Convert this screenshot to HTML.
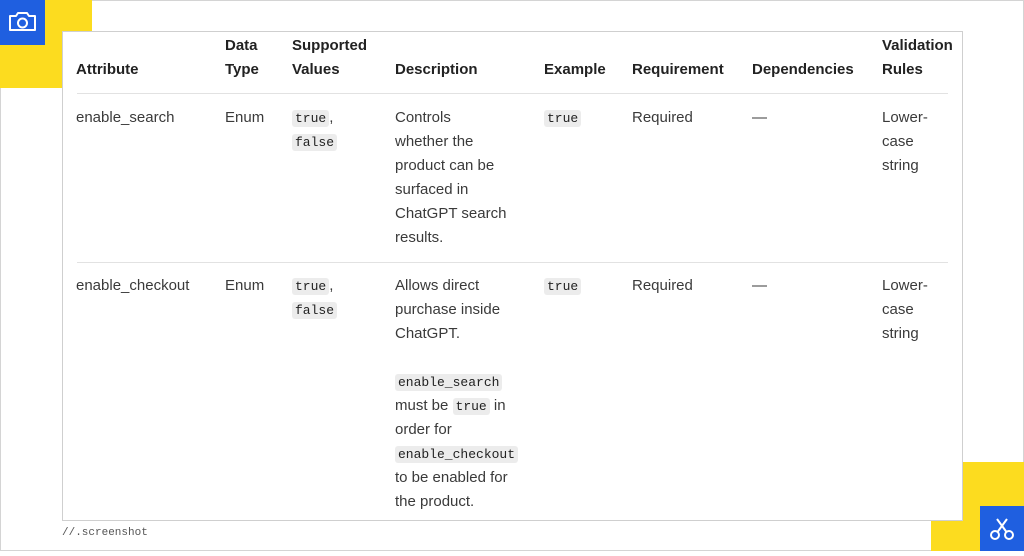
<!DOCTYPE html>
<html><head><style>
body{margin:0;width:1024px;height:551px;background:#fff;position:relative;overflow:hidden;font-family:"Liberation Sans",sans-serif;}
.frame{position:absolute;left:0;top:0;width:1022px;height:549px;border:1px solid #d4d4d4;}
.y1{position:absolute;left:0;top:0;width:92px;height:88px;background:#fcdc1f;}
.b1{position:absolute;left:0;top:0;width:45px;height:45px;background:#1f5fe0;}
.y2{position:absolute;left:931px;top:462px;width:93px;height:89px;background:#fcdc1f;}
.b2{position:absolute;left:980px;top:506px;width:44px;height:45px;background:#1f5fe0;}
.card{position:absolute;left:62px;top:31px;width:899px;height:488px;background:#fff;border:1px solid #cfcfcf;overflow:hidden;}
.t{position:absolute;font-size:15px;line-height:24px;color:#3a3a3a;}
.t div{height:24px;overflow:visible;white-space:nowrap;}
.h{font-weight:bold;color:#222;}
code{font-family:"Liberation Mono",monospace;font-size:13px;line-height:1;background:#ececec;border-radius:3px;padding:1px 3px;color:#222;}
.line{position:absolute;left:14px;width:871px;height:1px;background:#e2e2e2;}
.foot{position:absolute;left:62px;top:527px;font-family:"Liberation Mono",monospace;font-size:11px;color:#555;}
</style></head><body>
<div class="frame"></div>
<div class="y1"></div><div class="b1">
<svg width="45" height="45" viewBox="0 0 45 45"><path d="M10 16h6l2-3h9l2 3h6v14H10z" fill="none" stroke="#fff" stroke-width="2" stroke-linejoin="round"/><circle cx="22.5" cy="23" r="4.5" fill="none" stroke="#fff" stroke-width="2"/></svg></div>
<div class="y2"></div><div class="b2">
<svg width="44" height="45" viewBox="0 0 44 45"><circle cx="15" cy="29" r="4" fill="none" stroke="#fff" stroke-width="2"/><circle cx="29" cy="29" r="4" fill="none" stroke="#fff" stroke-width="2"/><path d="M17.5 26L27 13M26.5 26L17 13" stroke="#fff" stroke-width="2"/></svg></div>
<div class="card">
<div class="t h" style="left:13px;top:26px">Attribute</div>
<div class="t h" style="left:162px;top:2px">Data<br>Type</div>
<div class="t h" style="left:229px;top:2px">Supported<br>Values</div>
<div class="t h" style="left:332px;top:26px">Description</div>
<div class="t h" style="left:481px;top:26px">Example</div>
<div class="t h" style="left:569px;top:26px">Requirement</div>
<div class="t h" style="left:689px;top:26px">Dependencies</div>
<div class="t h" style="left:819px;top:2px">Validation<br>Rules</div>
<div class="line" style="top:61px"></div>
<div class="t" style="left:13px;top:74px">enable_search</div>
<div class="t" style="left:162px;top:74px">Enum</div>
<div class="t" style="left:229px;top:74px"><div><code>true</code>,</div><div><code>false</code></div></div>
<div class="t" style="left:332px;top:74px;width:130px">Controls<br>whether the<br>product can be<br>surfaced in<br>ChatGPT search<br>results.</div>
<div class="t" style="left:481px;top:74px"><code>true</code></div>
<div class="t" style="left:569px;top:74px">Required</div>
<div class="t" style="left:689px;top:74px">—</div>
<div class="t" style="left:819px;top:74px">Lower-<br>case<br>string</div>
<div class="line" style="top:230px"></div>
<div class="t" style="left:13px;top:242px">enable_checkout</div>
<div class="t" style="left:162px;top:242px">Enum</div>
<div class="t" style="left:229px;top:242px"><div><code>true</code>,</div><div><code>false</code></div></div>
<div class="t" style="left:332px;top:242px;width:135px"><div>Allows direct</div><div>purchase inside</div><div>ChatGPT.</div><div></div><div><code>enable_search</code></div><div>must be <code>true</code> in</div><div>order for</div><div><code>enable_checkout</code></div><div>to be enabled for</div><div>the product.</div></div>
<div class="t" style="left:481px;top:242px"><code>true</code></div>
<div class="t" style="left:569px;top:242px">Required</div>
<div class="t" style="left:689px;top:242px">—</div>
<div class="t" style="left:819px;top:242px">Lower-<br>case<br>string</div>
</div>
<div class="foot">//.screenshot</div>
</body></html>
